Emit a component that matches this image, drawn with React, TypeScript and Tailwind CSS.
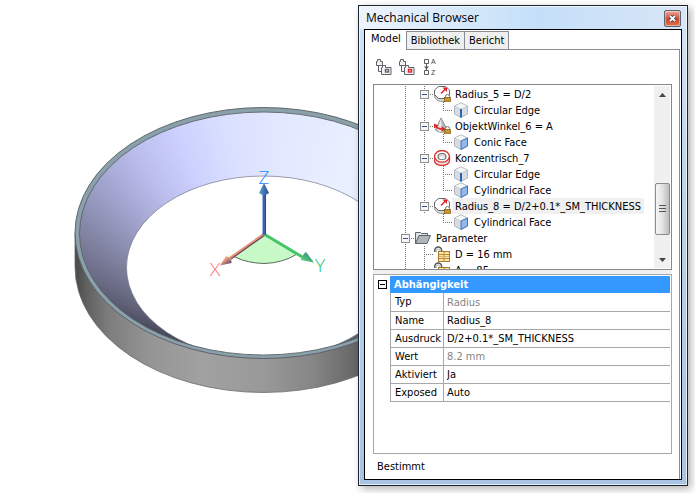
import { useState } from "react"
import type { ReactNode } from "react"

type Line = "none" | "full" | "tee" | "elbow" | "minus"
type IconName = "radius" | "angle" | "concentric" | "edge" | "face" | "folder" | "param"

interface TreeRow {
  lines: Line[]
  icon: IconName
  label: string
  selected?: boolean
}

const rows: TreeRow[] = [
  { lines: ["full", "minus"], icon: "radius", label: "Radius_5 = D/2" },
  { lines: ["full", "full", "elbow"], icon: "edge", label: "Circular Edge" },
  { lines: ["full", "minus"], icon: "angle", label: "ObjektWinkel_6 = A" },
  { lines: ["full", "full", "elbow"], icon: "face", label: "Conic Face" },
  { lines: ["full", "minus"], icon: "concentric", label: "Konzentrisch_7" },
  { lines: ["full", "full", "tee"], icon: "edge", label: "Circular Edge" },
  { lines: ["full", "full", "elbow"], icon: "face", label: "Cylindrical Face" },
  { lines: ["full", "minus"], icon: "radius", label: "Radius_8 = D/2+0.1*_SM_THICKNESS", selected: true },
  { lines: ["full", "none", "elbow"], icon: "face", label: "Cylindrical Face" },
  { lines: ["minus"], icon: "folder", label: "Parameter" },
  { lines: ["full", "tee"], icon: "param", label: "D = 16 mm" },
  { lines: ["full", "tee"], icon: "param", label: "A = 85" },
]

const properties = [
  { name: "Typ", value: "Radius", readOnly: true },
  { name: "Name", value: "Radius_8" },
  { name: "Ausdruck", value: "D/2+0.1*_SM_THICKNESS" },
  { name: "Wert", value: "8.2 mm", readOnly: true },
  { name: "Aktiviert", value: "Ja" },
  { name: "Exposed", value: "Auto" },
]

// shade of the conical inner wall by angle in degrees, clockwise from the right
const wallStops: [number, number[]][] = [
  [0, [190, 194, 225]],
  [45, [96, 97, 118]],
  [90, [60, 60, 74]],
  [125, [66, 66, 82]],
  [150, [96, 97, 120]],
  [180, [128, 130, 160]],
  [205, [160, 163, 204]],
  [225, [188, 191, 238]],
  [240, [204, 208, 255]],
  [255, [216, 222, 255]],
  [275, [226, 233, 255]],
  [300, [233, 239, 255]],
  [360, [228, 234, 255]],
]

function wallColor(deg: number) {
  const i = Math.max(1, wallStops.findIndex(s => s[0] >= deg))
  const [a, from] = wallStops[i - 1]
  const [b, to] = wallStops[i]
  const k = (deg - a) / (b - a)
  return `rgb(${from.map((v, n) => Math.round(v + (to[n] - v) * k)).join(",")})`
}

function wallPoint(deg: number, hole: boolean) {
  const t = (deg * Math.PI) / 180
  return hole
    ? `${263.5 + 136 * Math.cos(t)},${267.5 + 91 * Math.sin(t)}`
    : `${263.5 + 185 * Math.cos(t)},${233.5 + 123 * Math.sin(t)}`
}

const wall = Array.from({ length: 180 }, (_, i) => i * 2).map(d => ({
  points: [wallPoint(d, false), wallPoint(d + 2.6, false), wallPoint(d + 2.6, true), wallPoint(d, true)].join(" "),
  fill: wallColor(d),
}))

function Ring() {
  return (
    <svg width="527" height="493" viewBox="0 0 527 493" className="block max-w-none" role="img" aria-label="3D model">
      <defs>
        <linearGradient id="side" gradientUnits="userSpaceOnUse" x1="75" y1="0" x2="452" y2="0">
          <stop offset="0" stopColor="#484848" />
          <stop offset="0.03" stopColor="#606060" />
          <stop offset="0.09" stopColor="#7d7d7d" />
          <stop offset="0.2" stopColor="#959595" />
          <stop offset="0.34" stopColor="#a1a1a1" />
          <stop offset="0.5" stopColor="#999999" />
          <stop offset="0.63" stopColor="#868686" />
          <stop offset="0.76" stopColor="#626262" />
          <stop offset="1" stopColor="#404040" />
        </linearGradient>
        <linearGradient id="zHead"><stop offset="0" stopColor="#5aa5c8" /><stop offset="1" stopColor="#2b4a96" /></linearGradient>
        <linearGradient id="xHead" x1="0" y1="0" x2="1" y2="1"><stop offset="0.3" stopColor="#ffb27c" /><stop offset="0.9" stopColor="#5a3a72" /></linearGradient>
        <linearGradient id="yHead" x1="1" y1="0" x2="0" y2="1"><stop offset="0.2" stopColor="#3f7f8c" /><stop offset="0.8" stopColor="#50d070" /></linearGradient>
        <clipPath id="rim"><ellipse cx="263.5" cy="233.5" rx="184" ry="121.5" /></clipPath>
      </defs>
      <path d="M75 233 V267 A188.5 125.5 0 0 0 452 267 V233 Z" fill="url(#side)" stroke="#6b6b6b" strokeWidth="0.8" />
      <ellipse cx="263.5" cy="233" rx="188.5" ry="125.5" fill="#8aa0aa" stroke="#555e62" strokeWidth="0.9" />
      <g clipPath="url(#rim)">
        {wall.map(w => <polygon key={w.points} points={w.points} fill={w.fill} />)}
        <ellipse cx="263.5" cy="267.5" rx="137" ry="91.5" fill="#fff" stroke="#77778a" strokeWidth="0.7" />
      </g>
      <ellipse cx="263.5" cy="233.5" rx="184" ry="121.5" fill="none" stroke="#5a6468" strokeWidth="0.9" />

      <path d="M264 234 L297 254 Q283 263 264 263.500 Q247 263 235 257 Z" fill="#c8fac8" />
      <path d="M235 257 Q247 263 264 263.500 Q283 263 297 254" fill="none" stroke="#5c6a5c" />
      <path d="M264 234 L230 258" stroke="#e39575" strokeWidth="2.400" />
      <path d="M265 235 L231 259" stroke="#6a3c5c" strokeWidth="1.200" />
      <path d="M264 234 L304 258" stroke="#48c468" strokeWidth="3" />
      <path d="M264 235 V194" stroke="#3c66b4" strokeWidth="3" />
      <path d="M265.500 234 V194" stroke="#28468c" strokeWidth="1" />
      <path d="M264 183 L269 193 Q264 197 259 193 Z" fill="url(#zHead)" />
      <path d="M220 265.500 L226 256 Q232 258 231.500 263 Z" fill="url(#xHead)" />
      <path d="M314 262.500 L306 252 Q302 255 301 260 Z" fill="url(#yHead)" />
      <g className="font-['Lato'] text-[18px] font-light" textAnchor="middle">
        <text x="264" y="184" fill="#1e8cff">Z</text>
        <text x="215" y="276" fill="#ff6c6c">X</text>
        <text x="320" y="272" fill="#14c45a">Y</text>
      </g>
    </svg>
  )
}

function Connector({ line }: { line: Line }) {
  const dots = { stroke: "#707070", strokeDasharray: "1 1" }
  return (
    <svg width="19" height="16" className="shrink-0" shapeRendering="crispEdges">
      {(line === "full" || line === "tee" || line === "minus") && <path d="M9.500 0V16" {...dots} />}
      {line === "elbow" && <path d="M9.500 0V8" {...dots} />}
      {(line === "elbow" || line === "tee" || line === "minus") && <path d="M9 8.500H19" {...dots} />}
      {line === "minus" && (
        <>
          <rect x="5.500" y="4.500" width="8" height="8" fill="#f6f6f6" stroke="#8c8c8c" />
          <path d="M7 8.500H12" stroke="#3c50a0" />
        </>
      )}
    </svg>
  )
}

function Lock() {
  return (
    <>
      <path d="M11.500 12V10.500a2 2 0 0 1 4 0V12" fill="#fff" stroke="#777" />
      <rect x="10.500" y="11.500" width="6" height="4.500" fill="#c49632" stroke="#7c5c14" strokeWidth="0.7" />
    </>
  )
}

function Cube({ children }: { children: ReactNode }) {
  return (
    <>
      <path d="M8 1L14.500 4V12L8 15.500L1.500 12V4Z" fill="#d9dce0" stroke="#a2a8ae" strokeWidth="0.8" />
      <path d="M8 1L14.500 4L8 7L1.500 4Z" fill="#f6f7f8" stroke="#b4babf" strokeWidth="0.6" />
      {children}
    </>
  )
}

const icons: Record<IconName, ReactNode> = {
  radius: (
    <>
      <path d="M0.500 6V10C1 13 4 15.500 8 15.500S15 13 15.500 10V6" fill="#d8d8d8" stroke="#888" strokeWidth="0.9" />
      <path d="M4.500 0.500H11.500L15.500 4V8.500L11.500 12.500H4.500L0.500 8.500V4Z" fill="#fff" stroke="#666" strokeLinejoin="round" />
      <path d="M7 7.500L11 3.500" stroke="#e02020" strokeWidth="1.500" />
      <path d="M8.500 1.500H13V6Z" fill="#e02020" />
      <Lock />
    </>
  ),
  angle: (
    <>
      <path d="M7 0L13.500 12Q8 17 1.500 12Z" fill="#b4b8bc" stroke="#7c8084" strokeWidth="0.8" />
      <path d="M7 1L8.500 14.500Q5 14 3 12Z" fill="#e8eaec" />
      <path d="M1.500 8Q4 11.500 10 11" fill="none" stroke="#e02828" strokeWidth="1.500" />
      <path d="M0 10.500V5.500L4.500 7.500ZM7.500 8L11.500 11L7.500 14Z" fill="#e02828" />
      <Lock />
    </>
  ),
  concentric: (
    <>
      <path d="M0.500 6v4.500c0 3 3.500 5 7.500 5s7.500-2 7.500-5v-4.500" fill="#e8e4e4" stroke="#d83434" strokeWidth="1.300" />
      <ellipse cx="8" cy="6.300" rx="7.400" ry="5.800" fill="#fff" stroke="#d83434" strokeWidth="1.300" />
      <ellipse cx="8" cy="6.500" rx="4" ry="3" fill="#dcdcdc" stroke="#666" strokeWidth="1.100" />
      <path d="M5 8Q8 5.500 11 8Q8 10.500 5 8Z" fill="#fff" />
    </>
  ),
  edge: (
    <Cube>
      <path d="M8 7V15.500" stroke="#2468b8" strokeWidth="2" />
    </Cube>
  ),
  face: (
    <Cube>
      <path d="M8 7L14.500 4V12L8 15.500Z" fill="#94b8ec" stroke="#2c6cbc" strokeWidth="0.9" />
    </Cube>
  ),
  folder: (
    <>
      <path d="M0.500 13.500V2.500H5.500L6.500 3.500H12.500V6" fill="#dfe2e5" stroke="#5c646c" />
      <path d="M0.500 13.500L4 5.500H15.500L12 13.500Z" fill="#b0b6bc" stroke="#5c646c" />
    </>
  ),
  param: (
    <>
      <path d="M0.800 6V4.500a3.400 3.400 0 0 1 6.800 0V6" fill="none" stroke="#555" strokeWidth="1.500" />
      <path d="M2.500 6V4.500a1.600 1.600 0 0 1 3.200 0V6" fill="none" stroke="#999" strokeWidth="0.8" />
      <rect x="4.500" y="5.500" width="11" height="10" fill="#ffe6a4" stroke="#a87c2c" />
      <path d="M5 8.500H15M5 12.500H15M10 6V15" stroke="#b88c3c" />
      <path d="M5 10.500H15" stroke="#d8b468" />
    </>
  ),
}

function Tree() {
  return (
    <div className="flex h-[186px] overflow-hidden border border-[#828790] bg-white">
      <ul className="min-w-0 flex-1 overflow-hidden pt-px pl-[22px]" aria-label="Model">
        {rows.map((r, i) => (
          <li key={i} className="flex h-4 items-center">
            {r.lines.map((l, n) => <Connector key={n} line={l} />)}
            <svg width="18" height="16" viewBox="0 0 18 16" className="shrink-0">{icons[r.icon]}</svg>
            <button className={`h-4 px-[3px] text-left leading-[18px] whitespace-nowrap ${r.selected ? "bg-[#f0f0f0]" : ""}`}>{r.label}</button>
          </li>
        ))}
      </ul>
      <div className="my-px mr-px flex w-4 flex-col items-center bg-[#f0f0f0]">
        <button aria-label="Scroll up" className="flex h-[17px] w-full items-center justify-center">
          <svg width="7" height="4"><path d="M3.500 0L7 4H0Z" fill="#444" /></svg>
        </button>
        <div className="h-20" />
        <button aria-label="Scroll position" className="flex h-[52px] w-[15px] flex-col items-center justify-center rounded-xs border border-[#8c8c8c] bg-linear-to-r from-[#f6f6f6] via-[#e2e2e2] to-[#bcbcc0]">
          <svg width="7" height="8" shapeRendering="crispEdges"><path d="M0 .5H7M0 3.500H7M0 6.500H7" stroke="#555" /></svg>
        </button>
        <button aria-label="Scroll down" className="mt-auto flex h-[17px] w-full items-center justify-center">
          <svg width="7" height="4"><path d="M3.500 4L7 0H0Z" fill="#444" /></svg>
        </button>
      </div>
    </div>
  )
}

function PropertyGrid() {
  const [open, setOpen] = useState(true)
  return (
    <div className="h-[180px] border border-[#a8a8ac] bg-white pt-px pr-px">
      <div className="flex h-[17px]">
        <button onClick={() => setOpen(!open)} aria-label="Abhängigkeit" className="flex w-4 items-center justify-end">
          <svg width="12" height="9" shapeRendering="crispEdges"><path d="M.5 .5H8.500V8.500H.5ZM2 4.500H7" fill="none" stroke="#000" /></svg>
        </button>
        <h2 className="flex-1 bg-[#3399ff] pl-1 text-[11px] leading-[18px] font-bold text-white">Abhängigkeit</h2>
      </div>
      {open && (
        <div className="pl-4">
          <table className="w-full table-fixed border-collapse">
            <tbody>
              {properties.map(p => (
                <tr key={p.name} className="h-[18px] border-b border-[#a8a8a8]">
                  <th scope="row" className="w-[53px] border-x border-[#a8a8a8] p-0 pt-px pl-1 text-left font-normal">{p.name}</th>
                  <td className="p-0">
                    <input aria-label={p.name} defaultValue={p.value} readOnly={p.readOnly}
                      className={`block h-[17px] w-full bg-transparent pt-px pl-[3px] outline-none ${p.readOnly ? "text-[#848484]" : "text-black"}`} />
                  </td>
                </tr>
              ))}
            </tbody>
          </table>
        </div>
      )}
    </div>
  )
}

function FolderTree({ mark }: { mark: string }) {
  return (
    <svg width="17" height="17" fill="none" stroke="#5c6268">
      <path d="M1.500 6.500V2.500H2.500V0.500H5.500V2.500H7.500V6.500ZM3.500 7V12.500H6" fill="#f2f2f2" />
      <path d="M6.500 15.500V8.500H7.500V6.500H10.500V8.500H16V15.500Z" fill="#f2f2f2" />
      <rect x="10.500" y="10.500" width="3" height="2.500" stroke={mark} strokeWidth="1.400" fill="#fff" />
    </svg>
  )
}

function Toolbar() {
  return (
    <div className="flex h-[34px] items-center gap-[6px] pl-0.5">
      <button aria-label="Group by entity"><FolderTree mark="#5c6268" /></button>
      <button aria-label="Group by constraint"><FolderTree mark="#e02020" /></button>
      <button aria-label="Sort by name" className="ml-0.5">
        <svg width="14" height="18" fill="none" stroke="#555b60">
          <path d="M1.500 1.500H5.500V5.500H1.500ZM1.500 12.500H5.500V16.500H1.500ZM3.500 6V12" />
          <path d="M1 8.500H6L3.500 11.500Z" fill="#555b60" stroke="none" />
          <g className="font-['Liberation_Sans'] text-[7px]" fill="#444" stroke="none">
            <text x="8" y="6">A</text>
            <text x="8" y="17">Z</text>
          </g>
        </svg>
      </button>
    </div>
  )
}

function Browser() {
  const tabs = ["Model", "Bibliothek", "Bericht"]
  const [active, setActive] = useState("Model")
  return (
    <aside className="mt-[5px] mr-[7px] mb-[7px] flex w-[330px] shrink-0 flex-col border border-[#1c2430] bg-linear-to-b from-[#d3e4f6] via-[#b9d3ee] via-40% to-[#a9c4e2] px-[5px] pb-[5px] shadow-[3px_3px_8px_rgba(0,0,0,0.3)] inset-ring inset-ring-white/70">
      <header className="-mx-1 mt-px flex h-[22px] items-center justify-between bg-linear-to-r from-[#edf4fc] via-[#c4dff9] via-55% to-[#d8e6f6] pr-[5px] pl-1.5">
        <h1 className="font-['Open_Sans','Noto_Sans',sans-serif] text-[12px] leading-4 text-black">Mechanical Browser</h1>
        <button aria-label="Close" className="flex size-[17px] items-center justify-center rounded-xs border border-[#5c6478] bg-linear-to-b from-[#f0a898] via-[#c8482c] via-55% to-[#dc7850] inset-ring inset-ring-white/40">
          <svg width="9" height="9"><path d="M2 2L7 7M7 2L2 7" stroke="#404860" strokeWidth="3.600" /><path d="M2 2L7 7M7 2L2 7" stroke="#fff" strokeWidth="1.800" /></svg>
        </button>
      </header>
      <div className="flex flex-1 flex-col border border-black bg-white">
        <nav className="flex h-5 items-end" role="tablist">
          {tabs.map(t => (
            <button key={t} role="tab" aria-selected={t === active} onClick={() => setActive(t)}
              className={t === active
                ? "h-5 px-[6px] pb-0.5"
                : "-ml-px h-[19px] border border-[#898c95] bg-[#efefef] px-1 pt-px"}>
              {t}
            </button>
          ))}
          <span className="flex-1 border-b border-[#898c95]" />
          <span className="w-px" />
        </nav>
        <div className="mr-px flex-1 border-r border-[#898c95] pr-[7px] pl-2">
          <Toolbar />
          <Tree />
          <div className="h-1 bg-[#f0f0f0]" />
          <PropertyGrid />
          <p className="pt-[5px] pl-1 leading-4">Bestimmt</p>
        </div>
      </div>
    </aside>
  )
}

export default function App() {
  return (
    <div className="flex min-h-screen bg-white font-['DejaVu_Sans_Condensed','DejaVu_Sans',sans-serif] text-[11px] leading-4 text-black">
      <main className="min-w-0 flex-1 overflow-hidden">
        <Ring />
      </main>
      <Browser />
    </div>
  )
}
